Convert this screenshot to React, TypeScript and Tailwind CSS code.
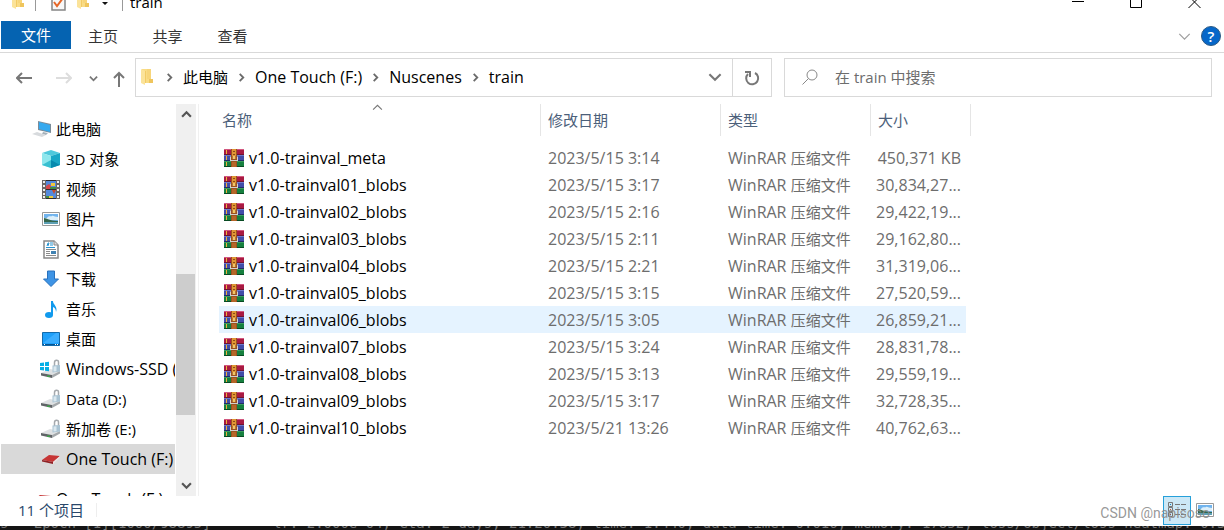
import React from 'react';

const files = [
  ['v1.0-trainval_meta', '2023/5/15 3:14', '450,371 KB'],
  ['v1.0-trainval01_blobs', '2023/5/15 3:17', '30,834,27...'],
  ['v1.0-trainval02_blobs', '2023/5/15 2:16', '29,422,19...'],
  ['v1.0-trainval03_blobs', '2023/5/15 2:11', '29,162,80...'],
  ['v1.0-trainval04_blobs', '2023/5/15 2:21', '31,319,06...'],
  ['v1.0-trainval05_blobs', '2023/5/15 3:15', '27,520,59...'],
  ['v1.0-trainval06_blobs', '2023/5/15 3:05', '26,859,21...'],
  ['v1.0-trainval07_blobs', '2023/5/15 3:24', '28,831,78...'],
  ['v1.0-trainval08_blobs', '2023/5/15 3:13', '29,559,19...'],
  ['v1.0-trainval09_blobs', '2023/5/15 3:17', '32,728,35...'],
  ['v1.0-trainval10_blobs', '2023/5/21 13:26', '40,762,63...'],
];

function Folder() {
  return (
    <svg width="12" height="18" viewBox="0 0 12 18" className="shrink-0">
      <path d="M1 1h9v14H1z" fill="#f9dc86" />
      <path d="M8 11h4v4H8z" fill="#efc55d" />
      <path d="M6 1h4v10H6z" fill="#f7d57a" />
      <path d="M0 1l4 2v14l-4-2z" fill="#fbe39a" />
      <path d="M4 3h1v12H4z" fill="#f2cb66" />
    </svg>
  );
}

function Chevron({ dir, size = 9, color = '#6b6b6b', width = 2 }: { dir: 'up' | 'down' | 'right'; size?: number; color?: string; width?: number }) {
  const d = dir === 'up' ? 'M1 7l4-4 4 4' : dir === 'down' ? 'M1 3l4 4 4-4' : 'M3 1l4 4-4 4';
  return (
    <svg width={size} height={size} viewBox="0 0 10 10" className="shrink-0" fill="none" stroke={color} strokeWidth={width}>
      <path d={d} />
    </svg>
  );
}

function RarIcon() {
  return (
    <svg width="20" height="19" viewBox="0 0 20 19" className="shrink-0">
      <path d="M0 1h20v6H0z" fill="#a81a42" />
      <path d="M0 1h20v1H0z" fill="#d2587f" />
      <path d="M0 6h20v1H0z" fill="#6f1430" />
      <path d="M0 7h20v6H0z" fill="#414da8" />
      <path d="M0 7h20v1H0z" fill="#6d78cc" />
      <path d="M0 12h20v1H0z" fill="#232c68" />
      <path d="M0 13h20v6H0z" fill="#16803f" />
      <path d="M0 13h20v1H0z" fill="#3b9c5f" />
      <path d="M0 18h20v1H0z" fill="#084a22" />
      <path d="M2 2h1v4H2zM2 8h1v4H2zM2 14h1v4H2z" fill="#f0b03a" />
      <path d="M7 1h6v18H7z" fill="#9b5120" />
      <path d="M8 1h4v8H8z" fill="#e09534" />
      <path d="M9 3h2v1H9zM9 6h2v1H9z" fill="#8b4a18" />
      <path d="M6 9l1-1v4h6V8l1 1v4H6z" fill="#d3d0cc" />
      <path d="M8 8h4v3H8z" fill="#b5743a" />
      <path d="M9 8h2v3H9z" fill="#f2c765" />
      <path d="M8 14h4v5H8z" fill="#b56628" />
    </svg>
  );
}

function PictureIcon() {
  return (
    <svg width="18" height="14" viewBox="0 0 18 14">
      <path d="M.5.5h17v13H.5z" fill="#fff" stroke="#999" />
      <path d="M2 2h14v10H2z" fill="#71b4ee" />
      <path d="M5 6c2-3 4-1 5-2s3 1 6 1v3H2V6z" fill="#dceffa" />
      <path d="M2 6c3 0 5 3 14 3v1H2z" fill="#35664c" />
      <path d="M2 10h14v2H2z" fill="#5c9fb4" />
    </svg>
  );
}

function DriveIcon({ windows = false }: { windows?: boolean }) {
  return (
    <svg width="22" height="20" viewBox="0 0 22 20">
      <path d="M14.500 7V3.500c0-3 4-3 4-.5v4" fill="none" stroke="#a5a9ad" strokeWidth="1.500" />
      <path d="M1 14l9-4 10 2-8 4z" fill="#dfe1e3" />
      <path d="M1 14l11 2v3L1 16.500z" fill="#606467" />
      <path d="M12 16l8-4v2.500L12 19z" fill="#a4a8ab" />
      <path d="M7 16.500h3v1.500H7z" fill="#3fa04b" />
      <path d="M12.500 6.500l7.500-.5v6.500l-7.500 1z" fill="#a9c3d3" />
      <path d="M13.500 7.500l3-.2v5l-3 .3z" fill="#dbe8ef" />
      {windows && <path d="M0 4l4-.5V7H0zM5 3.300l4-.6V7H5zM0 8h4v3.500L0 11zM5 8h4v4.300l-4-.6z" fill="#05aee5" />}
    </svg>
  );
}

function RedDrive() {
  return (
    <svg width="20" height="12" viewBox="0 0 20 12">
      <path d="M1 7l7-5 11 1-7 6z" fill="#c73636" />
      <path d="M1 7l11 2v2L1 8.500z" fill="#8f2226" />
      <path d="M12 9l7-6v1.500L12 11z" fill="#ece3e3" />
    </svg>
  );
}

const places: { label: string; latin?: boolean; icon: React.ReactNode }[] = [
  {
    label: '3D 对象',
    icon: (
      <svg width="18" height="18" viewBox="0 0 18 18">
        <path d="M9 0l9 3-9 3-9-3z" fill="#4fc9dc" />
        <path d="M0 3l9 3v12l-9-3z" fill="#8ee7ed" />
        <path d="M9 6l9-3v12l-9 3z" fill="#19a7c6" />
        <path d="M0 15l9-5v8z" fill="#38bfd0" />
        <path d="M9 10l9 5-9 3z" fill="#078aae" />
      </svg>
    ),
  },
  {
    label: '视频',
    icon: (
      <svg width="18" height="19" viewBox="0 0 18 19">
        <path d="M0 0h18v19H0z" fill="#302c2c" />
        <path d="M0 0h4v19H0zM14 0h4v19h-4z" fill="#6a6666" />
        <path d="M1 1h2v2H1zM1 5h2v2H1zM1 9h2v2H1zM1 13h2v2H1zM1 16h2v2H1zM15 1h2v2h-2zM15 5h2v2h-2zM15 9h2v2h-2zM15 13h2v2h-2zM15 16h2v2h-2z" fill="#eee" />
        <path d="M4 1h10v8H4zM4 10h10v8H4z" fill="#5389dd" />
        <path d="M4 6l3-2 2 2v3H4z" fill="#d7474c" />
        <path d="M9 3h4v3H9zM7 16h4v2H7z" fill="#f0c83c" />
        <path d="M8 7h6v2H8zM4 16h3v2H4z" fill="#418c45" />
        <path d="M10 10h4l-2 4z" fill="#c94b2e" />
      </svg>
    ),
  },
  { label: '图片', icon: <PictureIcon /> },
  {
    label: '文档',
    icon: (
      <svg width="16" height="19" viewBox="0 0 16 19">
        <path d="M1 1h10l4 4v13H1z" fill="#fff" stroke="#888" strokeWidth="1.500" />
        <path d="M11 1v4h4" fill="#ddd" stroke="#888" />
        <path d="M4 6l1-3h1l-1 3M7 3h3M7 5h3M3 7.500h9" fill="none" stroke="#2894d0" />
        <path d="M3 9.500h10M3 11.500h4M3 13.500h4M3 15.500h10" stroke="#8a8a8a" />
        <path d="M8 11h5v3H8z" fill="#4182b2" />
      </svg>
    ),
  },
  {
    label: '下载',
    icon: (
      <svg width="18" height="18" viewBox="0 0 18 18">
        <path d="M5.500 1h7v8h4L9 16.500 1.500 9h4z" fill="#3e94e5" stroke="#2871bd" />
      </svg>
    ),
  },
  {
    label: '音乐',
    icon: (
      <svg width="12" height="19" viewBox="0 0 12 19">
        <ellipse cx="4" cy="15" rx="4" ry="3" fill="#119aed" />
        <path d="M6 1h2c0 4 5 5 3 11-.2-3-1-4-3-5v8H6z" fill="#119aed" />
      </svg>
    ),
  },
  {
    label: '桌面',
    icon: (
      <svg width="18" height="14" viewBox="0 0 18 14">
        <path d="M.5.5h17v13H.5z" fill="#1ea0fa" stroke="#126bac" />
        <path d="M1 11L14 1h3v10z" fill="#3caeff" />
        <path d="M1 12h16v1H1z" fill="#07538f" />
        <path d="M2 12.500h1M13 12.500h1M15 12.500h1" stroke="#fff" />
      </svg>
    ),
  },
  { label: 'Windows-SSD (C:)', latin: true, icon: <DriveIcon windows /> },
  { label: 'Data (D:)', icon: <DriveIcon /> },
  { label: '新加卷 (E:)', icon: <DriveIcon /> },
  { label: 'One Touch (F:)', latin: true, icon: <RedDrive /> },
];

const crumbs = ['此电脑', 'One Touch (F:)', 'Nuscenes', 'train'];

function TitleBar() {
  return (
    <header className="-mt-[18px] flex h-[38px] items-center pl-3">
      <Folder />
      <span className="ml-[11px] h-5 w-px bg-[#999]" />
      <button aria-label="属性" className="ml-[15px]">
        <svg width="15" height="20" viewBox="0 0 15 20" fill="none">
          <path d="M1 1h13v18H1z" fill="#f8f8f8" stroke="#858585" strokeWidth="1.500" />
          <path d="M3 11l3 4 6-8" stroke="#e66728" strokeWidth="2" />
        </svg>
      </button>
      <span className="ml-[11px] flex"><Folder /></span>
      <button aria-label="自定义快速访问工具栏" className="ml-3">
        <svg width="8" height="10" viewBox="0 0 8 10"><path d="M1 3h6v1H1zM1 6h6L4 9z" fill="#111" /></svg>
      </button>
      <span className="ml-[13px] h-5 w-px bg-[#999]" />
      <h1 className="ml-[7px] pt-[2px] text-[15px] leading-5">train</h1>
      <div className="mr-px ml-auto flex">
        <button aria-label="最小化" className="flex w-[58px] justify-center"><svg width="12" height="13"><path d="M0 6h12v1H0z" /></svg></button>
        <button aria-label="最大化" className="flex w-[58px] justify-center"><svg width="12" height="13"><path d="M.5 1.500h11v11H.5z" fill="none" stroke="#000" /></svg></button>
        <button aria-label="关闭" className="flex w-[58px] justify-center"><svg width="13" height="13"><path d="M.5 1l12 12M12.500 1l-12 12" stroke="#000" /></svg></button>
      </div>
    </header>
  );
}

function Ribbon() {
  return (
    <nav className="flex h-[33px] items-start border-b border-[#d9d9d9] pt-px pl-px text-[#333]">
      <button className="h-7 w-[70px] bg-[#0563b1] text-white">文件</button>
      <button className="h-[30px] w-16">主页</button>
      <button className="h-[30px] w-[65px]">共享</button>
      <button className="h-[30px] w-[65px]">查看</button>
      <div className="mr-[3px] ml-auto flex h-[30px] items-center gap-[10px]">
        <button aria-label="展开功能区"><Chevron dir="down" size={13} color="#a0a0a0" width={1} /></button>
        <button aria-label="帮助" className="flex h-5 w-5 items-center justify-center rounded-full border border-[#2b5a85] bg-[#0667c9] text-[15px] leading-5 font-semibold text-white">?</button>
      </div>
    </nav>
  );
}

function AddressRow() {
  return (
    <div className="flex h-[51px] items-start pt-[5px] pr-3">
      <div className="flex h-10 w-[135px] shrink-0 items-center pl-4">
        <button aria-label="后退">
          <svg width="16" height="12" fill="none" stroke="#777" strokeWidth="2"><path d="M1 6h15M6 1L1 6l5 5" /></svg>
        </button>
        <button aria-label="前进" className="ml-6">
          <svg width="16" height="12" fill="none" stroke="#ddd" strokeWidth="2"><path d="M0 6h15M10 1l5 5-5 5" /></svg>
        </button>
        <button aria-label="最近浏览的位置" className="ml-[17px]"><Chevron dir="down" color="#777" /></button>
        <button aria-label="上移" className="ml-[15px] pt-[2px]">
          <svg width="12" height="16" fill="none" stroke="#777" strokeWidth="2"><path d="M6 16V2M1 7l5-5 5 5" /></svg>
        </button>
      </div>
      <div className="flex h-[39px] min-w-0 flex-1 items-center border border-[#d9d9d9] pb-px">
        <span className="mr-3 ml-[5px] flex"><Folder /></span>
        {crumbs.map((c, i) => (
          <span key={c} className="flex items-center">
            <Chevron dir="right" />
            <button className={i === 0 ? 'mx-[9px] whitespace-nowrap' : 'mx-[9px] text-[16px] whitespace-nowrap'}>{c}</button>
          </span>
        ))}
        <button aria-label="历史记录" className="mr-[10px] ml-auto"><Chevron dir="down" size={14} color="#777" width={1.5} /></button>
        <button aria-label="刷新" className="-mb-px flex h-[37px] w-[39px] items-center justify-center border-l border-[#d9d9d9]">
          <svg width="16" height="17" viewBox="0 0 16 17" fill="none" stroke="#777" strokeWidth="2">
            <path d="M11 4a6 6 0 1 1-7 1" />
            <path d="M1 3h5v5" />
          </svg>
        </button>
      </div>
      <label className="ml-3 flex h-[39px] w-[428px] items-center border border-[#d9d9d9] pb-px">
        <svg width="16" height="16" viewBox="0 0 16 16" fill="none" stroke="#888" className="ml-[17px] shrink-0">
          <circle cx="10" cy="6" r="5" />
          <path d="M6.500 9.500L.5 15.500" />
        </svg>
        <input aria-label="搜索" placeholder="在 train 中搜索" className="ml-[17px] min-w-0 flex-1 bg-transparent outline-none placeholder:text-[#6d6d6d]" />
      </label>
    </div>
  );
}

function Sidebar() {
  return (
    <aside className="flex w-[199px] shrink-0 overflow-hidden border-r border-[#f0f0f0]">
      <ul className="min-w-0 flex-1 overflow-hidden pt-[10px] pr-px pl-px">
        <li className="flex h-[30px] items-center gap-[5px] pl-[31px] whitespace-nowrap">
          <svg width="19" height="18" viewBox="0 0 19 18">
            <path d="M6 1l13 3v9L6 10z" fill="#7b8c99" />
            <path d="M7 2l11 3v7L7 9z" fill="#35a9ef" />
            <path d="M11 12l5 1-2 2-4-1z" fill="#a5b1ba" />
            <path d="M0 14l5-2 9 3-4 2z" fill="#d7dadd" />
          </svg>
          此电脑
        </li>
        {places.map((p) => (
          <li key={p.label} className={p.label === 'One Touch (F:)' ? 'flex h-[30px] items-center overflow-hidden bg-[#d9d9d9]' : 'flex h-[30px] items-center overflow-hidden'}>
            <span className="ml-[39px] flex w-[22px] shrink-0 justify-center">{p.icon}</span>
            <span className={p.latin ? 'ml-1 text-[16px] whitespace-nowrap' : 'ml-1 whitespace-nowrap'}>{p.label}</span>
          </li>
        ))}
        <li className="mt-[10px] flex h-[30px] items-center gap-1 pl-[31px] text-[16px] whitespace-nowrap"><RedDrive />One Touch (F:)</li>
      </ul>
      <div className="mr-[2px] flex w-5 shrink-0 flex-col items-center bg-[#f0f0f0]">
        <button aria-label="向上滚动" className="flex h-5 items-center"><Chevron dir="up" size={11} color="#555" /></button>
        <div className="mt-[150px] h-[141px] w-full border-r border-[#f0f0f0] bg-[#cdcdcd]" />
        <button aria-label="向下滚动" className="mt-auto flex h-[22px] items-center"><Chevron dir="down" size={11} color="#555" /></button>
      </div>
    </aside>
  );
}

function FileTable() {
  return (
    <main className="min-w-0 flex-1 overflow-hidden pl-5">
      <table className="w-[747px] table-fixed border-collapse text-left text-[#6d6d6d]">
        <colgroup>
          <col className="w-[322px]" />
          <col className="w-[180px]" />
          <col className="w-[150px]" />
          <col className="w-[95px]" />
        </colgroup>
        <thead className="text-[#4c607a]">
          <tr className="h-10 align-top">
            <th className="p-0 font-normal">
              <div className="relative flex h-8 items-center border-r border-[#e5e5e5] pl-[3px]">
                名称
                <span className="absolute -top-[2px] left-[153px]"><Chevron dir="up" size={11} color="#777" width={1} /></span>
              </div>
            </th>
            <th className="p-0 font-normal"><div className="flex h-8 items-center border-r border-[#e5e5e5] pl-[7px]">修改日期</div></th>
            <th className="p-0 font-normal"><div className="flex h-8 items-center border-r border-[#e5e5e5] pl-[7px]">类型</div></th>
            <th className="p-0 font-normal"><div className="flex h-8 w-[100px] items-center border-r border-[#e5e5e5] pl-[7px]">大小</div></th>
          </tr>
        </thead>
        <tbody className="text-[16px]">
          {files.map(([name, date, size], i) => (
            <tr key={name} className={i === 6 ? 'h-[27px] bg-[#e5f3ff]' : 'h-[27px]'}>
              <td className="p-0"><div className="flex items-center gap-[5px] pl-[5px] text-black"><RarIcon />{name}</div></td>
              <td className="p-0 pl-[7px]">{date}</td>
              <td className="p-0 pl-[7px] whitespace-nowrap">WinRAR <span className="text-[15px]">压缩文件</span></td>
              <td className="p-0 pr-[5px] text-right whitespace-nowrap">{size}</td>
            </tr>
          ))}
        </tbody>
      </table>
    </main>
  );
}

export default function App() {
  return (
    <div className="overflow-hidden bg-white font-['Open_Sans','Noto_Sans_CJK_SC',sans-serif] text-[15px] leading-[22px] text-black">
      <TitleBar />
      <Ribbon />
      <AddressRow />
      <div className="flex h-[392px]">
        <Sidebar />
        <FileTable />
      </div>
      <footer className="relative flex h-[30px] items-center pr-[10px] pb-[2px] pl-[18px] text-[#29476b]">
        <span>11 个项目</span>
        <span className="ml-3 h-[14px] w-px bg-[#eee]" />
        <button aria-label="详细信息" className="ml-auto flex h-[29px] w-7 items-center justify-center border border-[#26a0da] bg-[#cce8f6]">
          <svg width="18" height="16" viewBox="0 0 18 16" fill="none" stroke="#777">
            <path d="M.5.5h4v4h-4zM.5 5.500h4v4h-4zM.5 10.500h4v4h-4zM7 2.500h5M13 2.500h5M7 7.500h5M13 7.500h5M7 12.500h5M13 12.500h5" />
            <path d="M2 2.500h1" stroke="#1683bb" />
            <path d="M2 7.500h1" stroke="#d04e28" />
            <path d="M2 12.500h1" stroke="#b82c2c" />
          </svg>
        </button>
        <button aria-label="大图标" className="ml-[5px]"><PictureIcon /></button>
        <span className="absolute right-[14px] bottom-[2px] font-['Roboto',sans-serif] text-[14px] text-[#8c8c8c]/90">CSDN @napisoso</span>
      </footer>
      <div className="flex h-1 items-end overflow-hidden bg-[#151515] font-['DejaVu_Sans_Mono',monospace] text-[14px] leading-[14px] whitespace-pre text-[#777]">
        <span className="w-[273px] shrink-0">s - Epoch [1][1000/98895]</span>
        <span>lr: 2.000e-04, eta: 2 days, 21:20:38, time: 1.440, data_time: 0.016, memory: 17852, loss/object/loss_heatmap: 0.339</span>
      </div>
    </div>
  );
}
